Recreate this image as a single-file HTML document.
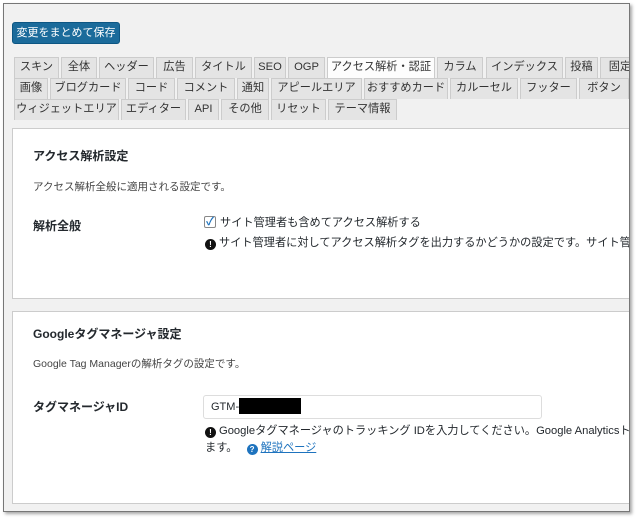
<!DOCTYPE html>
<html><head><meta charset="utf-8"><style>
*{box-sizing:border-box;margin:0;padding:0}
body{width:640px;height:520px;background:#fff;font-family:"Liberation Sans","Noto Sans CJK JP",sans-serif;color:#23282d;position:relative;overflow:hidden;font-size:11px}
#frame{position:absolute;left:3px;top:3px;width:627px;height:509px;border:1px solid #777;background:#f1f1f1;overflow:hidden;box-shadow:2px 2px 3px rgba(0,0,0,.35)}
.a{position:absolute;white-space:nowrap}
.btn{left:8px;top:18px;width:108px;height:22px;background:#1b6b9b;border:1px solid #0d5683;border-radius:3px;color:#fff;font-size:11px;line-height:20px;text-align:center}
.t{position:absolute;height:21px;background:#e4e4e4;border:1px solid #ccc;border-bottom:none;font-size:11.2px;line-height:19px;text-align:center;color:#333;white-space:nowrap;overflow:hidden}
.t.on{background:#fdfdfd}
.p{position:absolute;left:8px;width:640px;background:#fff;border:1px solid #ccc}
b{font-weight:bold}
.ic{display:inline-block;width:11px;height:11px;border-radius:50%;background:#111;color:#fff;font-size:8px;line-height:11px;text-align:center;font-weight:bold;vertical-align:-1px;margin-right:3px}
</style></head><body>
<div id="frame">
<div class="a btn">変更をまとめて保存</div>
<div class="t" style="left:10px;top:53px;width:45px">スキン</div>
<div class="t" style="left:57px;top:53px;width:36px">全体</div>
<div class="t" style="left:95px;top:53px;width:55px">ヘッダー</div>
<div class="t" style="left:152px;top:53px;width:37px">広告</div>
<div class="t" style="left:191px;top:53px;width:57px">タイトル</div>
<div class="t" style="left:250px;top:53px;width:32px">SEO</div>
<div class="t" style="left:284px;top:53px;width:37px">OGP</div>
<div class="t on" style="left:323px;top:53px;width:108px">アクセス解析・認証</div>
<div class="t" style="left:433px;top:53px;width:46px">カラム</div>
<div class="t" style="left:482px;top:53px;width:77px">インデックス</div>
<div class="t" style="left:561px;top:53px;width:33px">投稿</div>
<div class="t" style="left:596px;top:53px;width:40px">固定</div>
<div class="t" style="left:10px;top:74px;width:34px">画像</div>
<div class="t" style="left:46px;top:74px;width:76px">ブログカード</div>
<div class="t" style="left:124px;top:74px;width:47px">コード</div>
<div class="t" style="left:173px;top:74px;width:58px">コメント</div>
<div class="t" style="left:233px;top:74px;width:32px">通知</div>
<div class="t" style="left:267px;top:74px;width:91px">アピールエリア</div>
<div class="t" style="left:360px;top:74px;width:84px">おすすめカード</div>
<div class="t" style="left:446px;top:74px;width:68px">カルーセル</div>
<div class="t" style="left:516px;top:74px;width:57px">フッター</div>
<div class="t" style="left:575px;top:74px;width:50px">ボタン</div>
<div class="t" style="left:10px;top:95px;width:105px">ウィジェットエリア</div>
<div class="t" style="left:117px;top:95px;width:65px">エディター</div>
<div class="t" style="left:184px;top:95px;width:31px">API</div>
<div class="t" style="left:217px;top:95px;width:48px">その他</div>
<div class="t" style="left:267px;top:95px;width:55px">リセット</div>
<div class="t" style="left:324px;top:95px;width:69px">テーマ情報</div>
<div class="p" style="top:124px;height:171px"></div>
<div class="p" style="top:307px;height:193px"></div>
<div class="a" style="left:29px;top:143px;font-size:12px"><b>アクセス解析設定</b></div>
<div class="a" style="left:29px;top:175px;font-size:10.5px;color:#444">アクセス解析全般に適用される設定です。</div>
<div class="a" style="left:29px;top:213px;font-size:12px"><b>解析全般</b></div>
<div class="a" style="left:200px;top:212px;width:12px;height:12px;border:1px solid #888;border-radius:2px;background:#fff;color:#1e73be;font-size:11px;line-height:10px;text-align:center;font-weight:bold">✓</div>
<div class="a" style="left:216px;top:210px;font-size:11.2px">サイト管理者も含めてアクセス解析する</div>
<div class="a" style="left:201px;top:230px;font-size:11.2px"><span class="ic">!</span>サイト管理者に対してアクセス解析タグを出力するかどうかの設定です。サイト管理者</div>
<div class="a" style="left:29px;top:321px;font-size:12px"><b>Googleタグマネージャ設定</b></div>
<div class="a" style="left:29px;top:352px;font-size:10.5px;color:#444">Google Tag Managerの解析タグの設定です。</div>
<div class="a" style="left:29px;top:394px;font-size:12px"><b>タグマネージャID</b></div>
<div class="a" style="left:199px;top:391px;width:339px;height:24px;border:1px solid #ddd;border-radius:3px;background:#fff;font-size:11px;line-height:22px;padding-left:7px">GTM-<span style="display:inline-block;width:62px;height:16px;background:#000;vertical-align:-4px"></span></div>
<div class="a" style="left:201px;top:418px;font-size:11.2px"><span class="ic">!</span>Googleタグマネージャのトラッキング IDを入力してください。Google Analyticsトラッ</div>
<div class="a" style="left:201px;top:435px;font-size:11.2px">ます。 <span style="color:#1e73be;text-decoration:underline;margin-left:6px"><span class="ic" style="background:#1e73be">?</span>解説ページ</span></div>
</div>
</body></html>
